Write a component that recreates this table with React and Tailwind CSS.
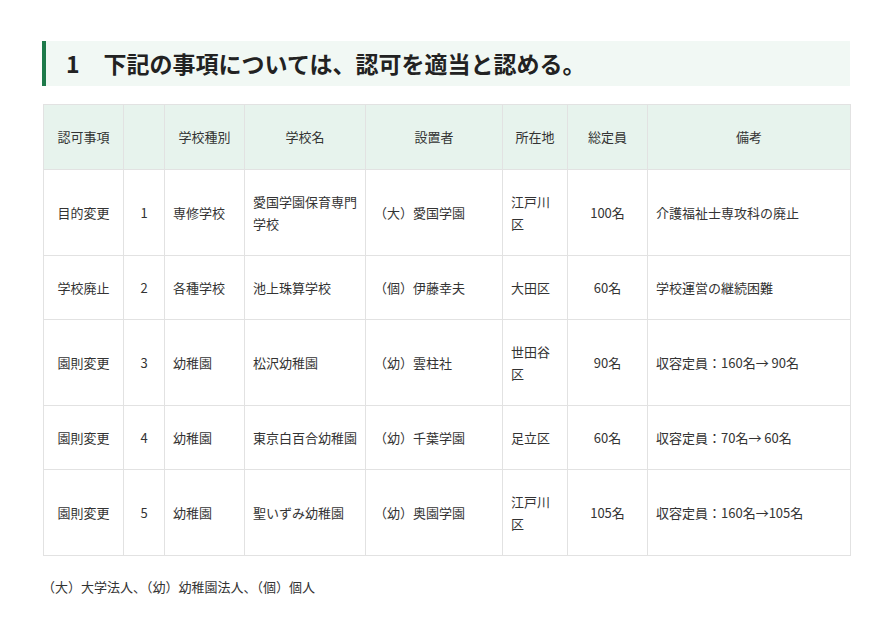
import React from "react";

// 認可事項の一覧
const ROWS = [
  { kind: "目的変更", no: "1", type: "専修学校", name: "愛国学園保育専門学校", owner: "（大）愛国学園", place: "江戸川区", cap: "100名", note: "介護福祉士専攻科の廃止" },
  { kind: "学校廃止", no: "2", type: "各種学校", name: "池上珠算学校", owner: "（個）伊藤幸夫", place: "大田区", cap: "60名", note: "学校運営の継続困難" },
  { kind: "園則変更", no: "3", type: "幼稚園", name: "松沢幼稚園", owner: "（幼）雲柱社", place: "世田谷区", cap: "90名", note: "収容定員：160名→ 90名" },
  { kind: "園則変更", no: "4", type: "幼稚園", name: "東京白百合幼稚園", owner: "（幼）千葉学園", place: "足立区", cap: "60名", note: "収容定員：70名→ 60名" },
  { kind: "園則変更", no: "5", type: "幼稚園", name: "聖いずみ幼稚園", owner: "（幼）奥園学園", place: "江戸川区", cap: "105名", note: "収容定員：160名→105名" },
];

const th = "border border-[#e2e2e2] px-2 pt-[21px] pb-[21px] font-normal text-center align-middle";
const td = "border border-[#e2e2e2] px-2 pt-[21px] pb-5 align-middle";

export default function App() {
  return (
    <div
      className="min-h-screen bg-white px-[42px] pt-[41px] text-[13px] leading-[22px] text-[#333]"
      style={{ fontFamily: '"Noto Sans CJK JP", "Noto Sans", sans-serif' }}
    >
      <div className="w-[808px]">
        <h2 className="flex h-[45px] items-center border-l-4 border-[#1e7a4a] bg-[#f1f8f4] pl-5 text-[23px] font-bold leading-none text-[#222]">
          <span className="mr-[24px]">1</span>
          <span>下記の事項については、認可を適当と認める。</span>
        </h2>

        <table className="mt-[18px] ml-px w-[807px] table-fixed border-collapse border border-[#e2e2e2]">
          <colgroup>
            <col className="w-[80px]" />
            <col className="w-[41px]" />
            <col className="w-[80px]" />
            <col className="w-[121px]" />
            <col className="w-[137px]" />
            <col className="w-[65px]" />
            <col className="w-[80px]" />
            <col className="w-[203px]" />
          </colgroup>
          <thead>
            <tr className="bg-[#e7f3ed]">
              <th className={th}>認可事項</th>
              <th className={th}></th>
              <th className={th}>学校種別</th>
              <th className={th}>学校名</th>
              <th className={th}>設置者</th>
              <th className={th}>所在地</th>
              <th className={th}>総定員</th>
              <th className={th}>備考</th>
            </tr>
          </thead>
          <tbody>
            {ROWS.map((r) => (
              <tr key={r.no}>
                <td className={td + " text-center"}>{r.kind}</td>
                <td className={td + " text-center"}>{r.no}</td>
                <td className={td}>{r.type}</td>
                <td className={td}>{r.name}</td>
                <td className={td}>{r.owner}</td>
                <td className={td}>{r.place}</td>
                <td className={td + " text-center"}>{r.cap}</td>
                <td className={td}>{r.note}</td>
              </tr>
            ))}
          </tbody>
        </table>

        <p className="mt-5">（大）大学法人、（幼）幼稚園法人、（個）個人</p>
      </div>
    </div>
  );
}
